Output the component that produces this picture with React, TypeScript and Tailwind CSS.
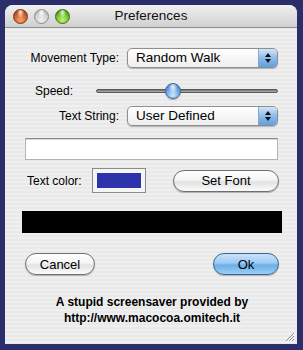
const font = { fontFamily: '"Liberation Sans", Arial, sans-serif' };

function Light({ kind }: { kind: 'red' | 'gray' | 'green' }) {
  const cls =
    kind === 'red'
      ? 'bg-[radial-gradient(ellipse_at_50%_18%,rgba(255,255,255,0.85)_0%,rgba(255,255,255,0)_40%),radial-gradient(circle_at_50%_78%,#f6a46c_0%,#cf5c26_55%,#86300c_100%)] border-[#7a3412]'
      : kind === 'gray'
      ? 'bg-[radial-gradient(ellipse_at_50%_18%,rgba(255,255,255,0.95)_0%,rgba(255,255,255,0)_40%),radial-gradient(circle_at_50%_78%,#f2f2f2_0%,#cfcfcf_55%,#9a9a9a_100%)] border-[#8c8c8c]'
      : 'bg-[radial-gradient(ellipse_at_50%_18%,rgba(255,255,255,0.85)_0%,rgba(255,255,255,0)_40%),radial-gradient(circle_at_50%_78%,#c4f27a_0%,#6cbf26_55%,#2f6d0c_100%)] border-[#3b6a1c]';
  return <div className={`w-[15px] h-[15px] rounded-full border ${cls}`} />;
}

function Popup({ label }: { label: string }) {
  return (
    <div className="w-[151px] h-[20px] rounded-[5px] border border-[#8e8e8e] bg-gradient-to-b from-[#ffffff] to-[#eeeeee] shadow-[0_1px_1px_rgba(0,0,0,0.25)] flex overflow-hidden">
      <div className="flex-1 pl-[8px] flex items-center text-[13.5px] text-black leading-none">{label}</div>
      <div className="w-[19px] border-l border-[#8aa6c8] bg-gradient-to-b from-[#d4e6fa] via-[#8dbbec] to-[#5f9fe0] flex flex-col items-center justify-center gap-[2px]">
        <svg width="6" height="4" viewBox="0 0 6 4"><path d="M3 0 L6 4 L0 4 Z" fill="#111" /></svg>
        <svg width="6" height="4" viewBox="0 0 6 4"><path d="M0 0 L6 0 L3 4 Z" fill="#111" /></svg>
      </div>
    </div>
  );
}

function PillButton({ label, width, primary }: { label: string; width: string; primary?: boolean }) {
  const look = primary
    ? 'border-[#3d6597] bg-[linear-gradient(180deg,#c9e2fa_0%,#9fcbf3_45%,#6aaee9_55%,#9ad0f6_100%)]'
    : 'border-[#6e6e6e] bg-[linear-gradient(180deg,#ffffff_0%,#f4f4f4_45%,#e2e2e2_55%,#fbfbfb_100%)]';
  return (
    <div
      className={`${width} h-[22px] rounded-full border ${look} shadow-[0_1px_1px_rgba(0,0,0,0.25)] flex items-center justify-center text-[13px] text-black leading-none`}
    >
      {label}
    </div>
  );
}

export default function App() {
  return (
    <div className="w-[303px] h-[350px] bg-[#2b2e6b] pt-[5px] pl-[5px]" style={font}>
      <div className="relative w-[292px] h-[339px] rounded-t-[8px] overflow-hidden flex flex-col bg-[repeating-linear-gradient(180deg,#efefef_0px,#efefef_2px,#e9e9e9_2px,#e9e9e9_4px)]">
        {/* Title bar */}
        <div className="relative h-[23px] shrink-0 border-b border-[#8f8f8f] bg-gradient-to-b from-[#f0f0f0] to-[#d0d0d0] flex items-center">
          <div className="flex items-center gap-[6px] pl-[8px]">
            <Light kind="red" />
            <Light kind="gray" />
            <Light kind="green" />
          </div>
          <div className="absolute inset-0 flex items-center justify-center text-[13.5px] text-[#111]">Preferences</div>
        </div>

        {/* Movement Type */}
        <div className="mt-[20px] h-[20px] flex items-center">
          <div className="w-[114px] text-right text-[12px] text-black">Movement Type:</div>
          <div className="ml-[8px]">
            <Popup label="Random Walk" />
          </div>
        </div>

        {/* Speed */}
        <div className="mt-[13px] h-[20px] flex items-center">
          <div className="w-[91px] pl-[30px] text-[12px] text-black">Speed:</div>
          <div className="relative w-[182px] h-[20px] flex items-center">
            <div className="w-full h-[4px] rounded-full border border-[#5a5a5a] bg-gradient-to-b from-[#6d6d6d] to-[#b8b8b8]" />
            <div className="absolute left-[69px] top-[2px] w-[16px] h-[16px] rounded-full border border-[#40679c] bg-[radial-gradient(ellipse_at_50%_22%,rgba(255,255,255,0.9)_0%,rgba(255,255,255,0)_45%),radial-gradient(circle_at_50%_80%,#c9e6ff_0%,#6fa9e6_50%,#3a74c0_100%)] shadow-[0_1px_1px_rgba(0,0,0,0.3)]" />
          </div>
        </div>

        {/* Text String */}
        <div className="mt-[5px] h-[20px] flex items-center">
          <div className="w-[114px] text-right text-[12px] text-black">Text String:</div>
          <div className="ml-[8px]">
            <Popup label="User Defined" />
          </div>
        </div>

        {/* Text field */}
        <div className="mt-[12px] ml-[20px] w-[253px] h-[22px] bg-white border border-[#b3b3b3] border-t-[#8a8a8a] shadow-[inset_0_1px_0_#d8d8d8]" />

        {/* Text color + Set Font */}
        <div className="mt-[8px] h-[25px] flex items-center">
          <div className="w-[87px] pl-[22px] text-[12px] text-black">Text color:</div>
          <div className="w-[54px] h-[25px] border border-[#8a8a8a] bg-[#f5f5f5] p-[4px]">
            <div className="w-full h-full bg-[#2d34ab]" />
          </div>
          <div className="ml-[27px]">
            <PillButton label="Set Font" width="w-[106px]" />
          </div>
        </div>

        {/* Black preview */}
        <div className="mt-[18px] ml-[17px] w-[260px] h-[22px] bg-black" />

        {/* Buttons */}
        <div className="mt-[20px] h-[22px] flex items-center justify-between pl-[20px] pr-[18px]">
          <PillButton label="Cancel" width="w-[70px]" />
          <PillButton label="Ok" width="w-[66px]" primary />
        </div>

        {/* Footer */}
        <div className="mt-[19px] flex flex-col items-center text-[12px] leading-[16px] font-bold text-black pl-[2px]">
          <div>A stupid screensaver provided by</div>
          <div>http://www.macocoa.omitech.it</div>
        </div>

        {/* Resize grip */}
        <svg className="absolute right-[2px] bottom-[2px]" width="12" height="12" viewBox="0 0 12 12">
          <path d="M11 3 L3 11 M11 6 L6 11 M11 9 L9 11" stroke="#8a8a8a" strokeWidth="1" />
          <path d="M12 4 L4 12 M12 7 L7 12 M12 10 L10 12" stroke="#ffffff" strokeWidth="1" />
        </svg>
      </div>
    </div>
  );
}
